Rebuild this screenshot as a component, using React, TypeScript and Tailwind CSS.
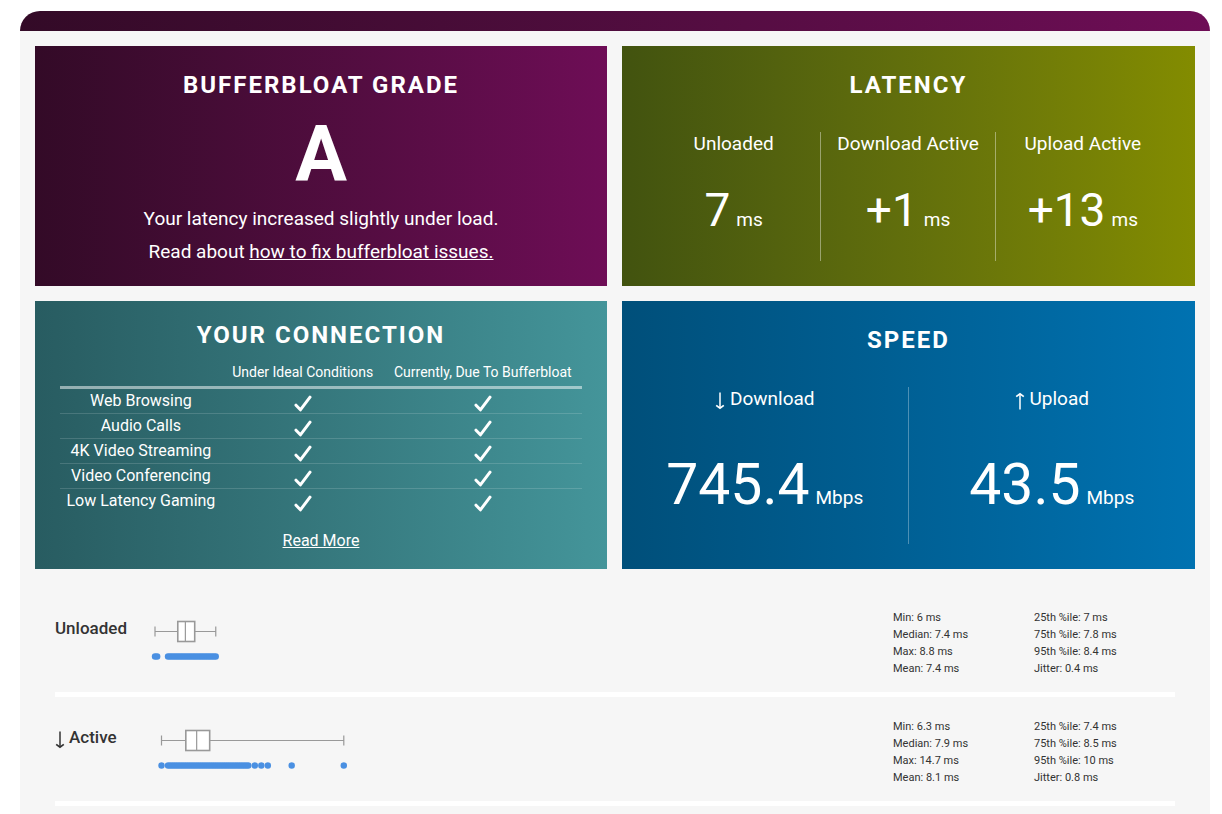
import React from "react";

type Series = {
  label: string;
  arrow?: boolean;
  min: number;
  q1: number;
  median: number;
  q3: number;
  max: number;
  samples: number[];
  left: string[];
  right: string[];
};

const range = (from: number, to: number) =>
  Array.from({ length: Math.round((to - from) * 10) + 1 }, (_, i) => from + i / 10);

const series: Series[] = [
  {
    label: "Unloaded",
    min: 6,
    q1: 7.05,
    median: 7.4,
    q3: 7.83,
    max: 8.8,
    samples: [6, 6.1, ...range(6.6, 8.8)],
    left: ["Min: 6 ms", "Median: 7.4 ms", "Max: 8.8 ms", "Mean: 7.4 ms"],
    right: ["25th %ile: 7 ms", "75th %ile: 7.8 ms", "95th %ile: 8.4 ms", "Jitter: 0.4 ms"],
  },
  {
    label: "Active",
    arrow: true,
    min: 6.3,
    q1: 7.42,
    median: 7.92,
    q3: 8.52,
    max: 14.7,
    samples: [6.3, ...range(6.6, 10.3), 10.6, 10.9, 11.2, 12.3, 14.7],
    left: ["Min: 6.3 ms", "Median: 7.9 ms", "Max: 14.7 ms", "Mean: 8.1 ms"],
    right: ["25th %ile: 7.4 ms", "75th %ile: 8.5 ms", "95th %ile: 10 ms", "Jitter: 0.8 ms"],
  },
];

const activities = [
  "Web Browsing",
  "Audio Calls",
  "4K Video Streaming",
  "Video Conferencing",
  "Low Latency Gaming",
];

function Arrow({ up = false }: { up?: boolean }) {
  return (
    <svg
      viewBox="0 0 10 18"
      className={up ? "mt-1 h-[18px] w-[10px] rotate-180" : "mt-1 h-[18px] w-[10px]"}
      fill="none"
      stroke="currentColor"
      strokeWidth="1.5"
      aria-hidden="true"
    >
      <path d="M5 0.5V15.5" />
      <path d="M1.2 13.4L5 16.2L8.8 13.4" strokeWidth="1.8" />
    </svg>
  );
}

function Check() {
  return (
    <svg
      viewBox="0 0 18 17"
      className="mx-auto mt-1 h-[17px] w-[18px]"
      fill="none"
      stroke="#fff"
      strokeWidth="3"
      strokeLinecap="round"
      strokeLinejoin="round"
      role="img"
      aria-label="Yes"
    >
      <path d="M2 10.2L6.4 14.8L16 2.2" />
    </svg>
  );
}

function Heading({ children }: { children: React.ReactNode }) {
  return (
    <h2 className="text-center text-2xl leading-8 font-bold tracking-[2px] uppercase">{children}</h2>
  );
}

function Metric({ label, value, unit }: { label: string; value: string; unit: string }) {
  return (
    <div className="text-center">
      <div className="text-[19px] leading-6 whitespace-nowrap">{label}</div>
      <div className="mt-7 flex items-baseline justify-center gap-[6px] leading-[52px] whitespace-nowrap">
        <span className="text-[46px]">{value}</span>
        <span className="text-[19px]">{unit}</span>
      </div>
    </div>
  );
}

function Speed({ label, value, up }: { label: string; value: string; up?: boolean }) {
  return (
    <div className="text-center">
      <div className="flex items-center justify-center gap-[5px] text-[19px] leading-6">
        <Arrow up={up} />
        {label}
      </div>
      <div className="mt-10 flex items-baseline justify-center gap-[6px] leading-[68px] whitespace-nowrap">
        <span className="text-[57px]">{value}</span>
        <span className="text-[19px]">Mbps</span>
      </div>
    </div>
  );
}

function BoxPlot({ s }: { s: Series }) {
  const x = (ms: number) => 5 + (ms - 6) * 21.7;
  return (
    <svg className="block h-[52px] w-full" role="img" aria-label={`${s.label} latency distribution`}>
      <g stroke="#999" strokeWidth="1.2" fill="#fff">
        <path d={`M${x(s.min)} 14.5H${x(s.max)}M${x(s.min)} 9.5V19.5M${x(s.max)} 9.5V19.5`} />
        <rect x={x(s.q1)} y="4.5" width={x(s.q3) - x(s.q1)} height="20" strokeWidth="1.6" />
        <path d={`M${x(s.median)} 4.5V24.5`} />
      </g>
      <g fill="#4a90e2">
        {s.samples.map((ms) => (
          <circle key={ms} cx={x(ms)} cy="39.5" r="3.2" />
        ))}
      </g>
    </svg>
  );
}

export default function App() {
  return (
    <div className="flex min-h-screen flex-col bg-white pt-[11px] pr-3 pl-5 font-[Roboto,sans-serif] text-white">
      <header className="h-5 rounded-t-[20px] bg-linear-to-r from-[#330a27] to-[#6e0d56]" />
      <main className="flex-1 bg-[#f6f6f6] p-[15px] pb-2">
        <div className="grid grid-cols-[calc(50%-8px)_1fr] gap-[15px]">
          <section className="bg-linear-to-r from-[#330a27] to-[#6e0d56] px-6 pt-[23px] pb-[18px] text-center">
            <Heading>Bufferbloat Grade</Heading>
            <div className="mt-[15px] text-[77px] leading-[78px] font-bold">A</div>
            <p className="mt-2 text-[19px] leading-[33px]">
              Your latency increased slightly under load.
              <br />
              Read about{" "}
              <a href="#fix" className="underline">
                how to fix bufferbloat issues.
              </a>
            </p>
          </section>

          <section className="bg-linear-to-r from-[#42530f] to-[#838c00] px-[25px] pt-[23px] pb-[25px]">
            <Heading>Latency</Heading>
            <div className="mt-[31px] grid h-[129px] grid-cols-3 divide-x divide-white/40">
              <Metric label="Unloaded" value="7" unit="ms" />
              <Metric label="Download Active" value="+1" unit="ms" />
              <Metric label="Upload Active" value="+13" unit="ms" />
            </div>
          </section>

          <section className="bg-linear-to-r from-[#285c61] to-[#44959a] px-[25px] pt-[18px] pb-[15px] text-center">
            <Heading>Your Connection</Heading>
            <table className="mt-2 w-full table-fixed border-collapse">
              <thead>
                <tr className="border-b-[3px] border-white/50 text-[14px] leading-[27px] whitespace-nowrap">
                  <td className="w-[31%]" />
                  <th scope="col" className="w-[31%] font-normal">Under Ideal Conditions</th>
                  <th scope="col" className="font-normal">Currently, Due To Bufferbloat</th>
                </tr>
              </thead>
              <tbody>
                {activities.map((name) => (
                  <tr key={name} className="border-b border-white/15 last:border-0">
                    <th scope="row" className="text-base leading-6 font-normal whitespace-nowrap">{name}</th>
                    <td><Check /></td>
                    <td><Check /></td>
                  </tr>
                ))}
              </tbody>
            </table>
            <a href="#more" className="mt-4 inline-block text-base leading-6 underline">
              Read More
            </a>
          </section>

          <section className="bg-linear-to-r from-[#004f7a] to-[#0072b1] pt-[23px] pb-[25px]">
            <Heading>Speed</Heading>
            <div className="mt-[31px] grid h-[157px] grid-cols-2 divide-x divide-white/30">
              <Speed label="Download" value="745.4" />
              <Speed label="Upload" value="43.5" up />
            </div>
          </section>
        </div>

        <div className="mx-5 mt-[19px] text-[#333]">
          {series.map((s) => (
            <section key={s.label} className="flex border-b-[5px] border-white pt-[21px] pb-[15px]">
              <h3 className="flex h-10 w-[95px] items-center gap-1 text-[17px] font-medium">
                {s.arrow && <Arrow />}
                {s.label}
              </h3>
              <div className="flex-1 pt-2">
                <BoxPlot s={s} />
              </div>
              <ul className="w-[141px] text-[11px] leading-[17px]">
                {s.left.map((t) => <li key={t}>{t}</li>)}
              </ul>
              <ul className="w-[141px] text-[11px] leading-[17px]">
                {s.right.map((t) => <li key={t}>{t}</li>)}
              </ul>
            </section>
          ))}
        </div>
      </main>
    </div>
  );
}
